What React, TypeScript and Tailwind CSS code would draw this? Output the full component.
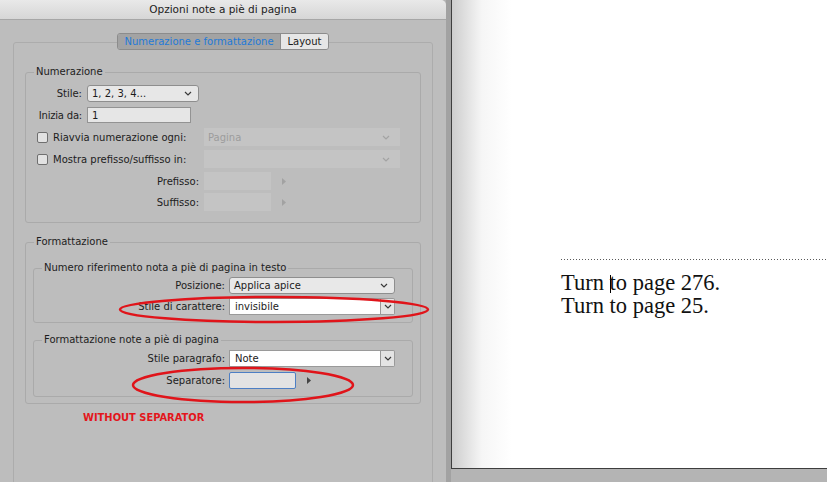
import React from "react";

const Chevron = ({ color = "#3a3a3a" }: { color?: string }) => (
  <svg width="8" height="5" viewBox="0 0 8 5">
    <path d="M1 1l3 3 3-3" fill="none" stroke={color} strokeWidth="1.2" />
  </svg>
);

const Arrow = ({ color = "#6e6e6e" }: { color?: string }) => (
  <svg width="4" height="7" viewBox="0 0 4 7">
    <path d="M0 0l4 3.5L0 7z" fill={color} />
  </svg>
);

const Checkbox = () => (
  <span className="inline-block w-[11px] h-[11px] rounded-[2px] border border-[#6f6f6f] bg-[#e2e2e2] shrink-0" />
);

const DisabledSelect = ({ value }: { value?: string }) => (
  <div className="ml-[5px] w-[196px] h-full bg-[#c4c4c4] flex items-center justify-between pl-[4px] pr-[10px] text-[#9c9c9c]">
    <span>{value}</span>
    <Chevron color="#a3a3a3" />
  </div>
);

const Combo = ({ value }: { value: string }) => (
  <div className="flex h-full">
    <div className="w-[152px] h-full bg-white border border-[#9a9a9a] flex items-center pl-[5px]">{value}</div>
    <div className="w-[14px] h-full bg-[#e4e4e4] border border-l-0 border-[#9a9a9a] rounded-r-[2px] flex items-center justify-center">
      <Chevron />
    </div>
  </div>
);

export default function App() {
  return (
    <div className="relative w-[827px] h-[482px] overflow-hidden flex bg-[#b4b4b4] font-['DejaVu_Sans',sans-serif] text-[10px] text-[#1c1c1c]">
      {/* dialog */}
      <div className="w-[446px] h-full shrink-0 flex flex-col bg-[#bdbdbd] rounded-tr-[5px]">
        <div className="h-[20px] shrink-0 flex items-center justify-center bg-[linear-gradient(#e9e9e9,#d6d6d6)] border-b border-[#a6a6a6] rounded-tr-[5px] text-[10.5px] text-[#222]">
          Opzioni note a piè di pagina
        </div>
        <div className="px-[13px] pt-[13px]">
          <div className="relative z-10 flex justify-center h-[17px]">
            <div className="flex h-full rounded-[3px] border border-[#8c8c8c] overflow-hidden">
              <div className="w-[162px] h-full bg-[#a3a3a3] flex items-center justify-center text-[#1f7ad8]">
                Numerazione e formattazione
              </div>
              <div className="w-[48px] h-full bg-[#e6e6e6] border-l border-[#8c8c8c] flex items-center justify-center">
                Layout
              </div>
            </div>
          </div>
          <div className="-mt-[8px] h-[460px] border border-[#acacac] rounded-[3px] px-[11px] pt-[22px]">
            {/* Numerazione */}
            <fieldset className="border border-[#aaaaaa] rounded-[3px] pb-[11px]">
              <legend className="ml-[8px] px-[2px] leading-[14px]">Numerazione</legend>
              <div className="flex items-center h-[17px] mt-[6px]">
                <span className="ml-[11px] w-[45px] flex justify-end whitespace-nowrap">Stile:</span>
                <div className="ml-[5px] w-[112px] h-full bg-[#e7e7e7] border border-[#8e8e8e] rounded-[3px] flex items-center justify-between pl-[4px] pr-[6px]">
                  <span>1, 2, 3, 4...</span>
                  <Chevron />
                </div>
              </div>
              <div className="flex items-center h-[16px] mt-[5px]">
                <span className="ml-[11px] w-[45px] flex justify-end whitespace-nowrap tracking-[-0.2px]">Inizia da:</span>
                <div className="ml-[5px] w-[104px] h-full bg-[#e6e6e6] border border-[#939393] flex items-center pl-[4px]">1</div>
              </div>
              <div className="flex items-center h-[18px] mt-[5px]">
                <div className="ml-[11px] w-[162px] flex items-center gap-[5px] whitespace-nowrap">
                  <Checkbox />
                  <span>Riavvia numerazione ogni:</span>
                </div>
                <DisabledSelect value="Pagina" />
              </div>
              <div className="flex items-center h-[18px] mt-[4px]">
                <div className="ml-[11px] w-[162px] flex items-center gap-[5px] whitespace-nowrap">
                  <Checkbox />
                  <span>Mostra prefisso/suffisso in:</span>
                </div>
                <DisabledSelect />
              </div>
              {["Prefisso:", "Suffisso:"].map((l, i) => (
                <div key={l} className={`flex items-center h-[18px] ${i === 0 ? "mt-[4px]" : "mt-[3px]"}`}>
                  <span className="ml-[11px] w-[162px] text-right">{l}</span>
                  <div className="ml-[5px] w-[67px] h-full bg-[#c4c4c4]" />
                  <span className="ml-[11px] flex">
                    <Arrow color="#a2a2a2" />
                  </span>
                </div>
              ))}
            </fieldset>

            {/* Formattazione */}
            <fieldset className="mt-[12px] border border-[#aaaaaa] rounded-[3px] px-[7px] pb-[6px]">
              <legend className="ml-[1px] px-[2px] leading-[14px]">Formattazione</legend>
              <fieldset className="mt-[12px] border border-[#aaaaaa] rounded-[3px] pb-[7px]">
                <legend className="ml-[8px] px-[2px] leading-[14px]">Numero riferimento nota a piè di pagina in testo</legend>
                <div className="flex items-center h-[17px] mt-[2px]">
                  <span className="w-[191px] text-right">Posizione:</span>
                  <div className="ml-[4px] w-[166px] h-full bg-[#e8e8e8] border border-[#8e8e8e] rounded-[3px] flex items-center justify-between pl-[4px] pr-[6px]">
                    <span>Applica apice</span>
                    <Chevron />
                  </div>
                </div>
                <div className="flex items-center h-[17px] mt-[4px]">
                  <span className="w-[191px] text-right">Stile di carattere:</span>
                  <div className="ml-[4px] h-full">
                    <Combo value="invisibile" />
                  </div>
                </div>
              </fieldset>
              <fieldset className="mt-[10px] border border-[#aaaaaa] rounded-[3px] pb-[7px]">
                <legend className="ml-[8px] px-[2px] leading-[14px]">Formattazione note a piè di pagina</legend>
                <div className="flex items-center h-[17px] mt-[3px]">
                  <span className="w-[191px] text-right">Stile paragrafo:</span>
                  <div className="ml-[4px] h-full">
                    <Combo value="Note" />
                  </div>
                </div>
                <div className="flex items-center h-[17px] mt-[5px]">
                  <span className="w-[191px] text-right">Separatore:</span>
                  <div className="ml-[4px] w-[67px] h-full bg-[#e3e3e3] border-[1.5px] border-[#4d7fc4] rounded-[2px]" />
                  <span className="ml-[11px] flex">
                    <Arrow color="#444" />
                  </span>
                </div>
              </fieldset>
            </fieldset>

            <div className="mt-[8px] ml-[58px] font-['DejaVu_Sans_Condensed','DejaVu_Sans',sans-serif] font-bold text-[11px] leading-[12px] text-[#e3161b]">
              WITHOUT SEPARATOR
            </div>
          </div>
        </div>
      </div>

      {/* gap between windows */}
      <div className="w-[5px] h-full shrink-0 bg-[#a2a2a2]" />

      {/* document page */}
      <div className="flex-1 h-full flex flex-col">
        <div className="h-[469px] border-l border-b border-[#3e3e3e] bg-[linear-gradient(to_right,#cdcdcd,#f6f6f6_30px,#ffffff_60px)] pl-[109px] pt-[259px]">
          <div className="h-px bg-[repeating-linear-gradient(to_right,#5a5a5a_0_1px,transparent_1px_3px)]" />
          <div className="mt-[11px] font-['Liberation_Serif',serif] text-[22.5px] leading-[23px] text-[#111]">
            <div>
              Turn <span className="inline-block w-px h-[18px] bg-black align-[-3px] -mr-px" />to page 276.
            </div>
            <div>Turn to page 25.</div>
          </div>
        </div>
      </div>

      {/* red annotations */}
      <svg className="absolute inset-0 pointer-events-none" width="827" height="482">
        <ellipse cx="274" cy="309.5" rx="154" ry="12.5" fill="none" stroke="#e0141a" strokeWidth="2.5" />
        <ellipse cx="243" cy="385" rx="110" ry="17" fill="none" stroke="#e0141a" strokeWidth="2.5" />
      </svg>
    </div>
  );
}
